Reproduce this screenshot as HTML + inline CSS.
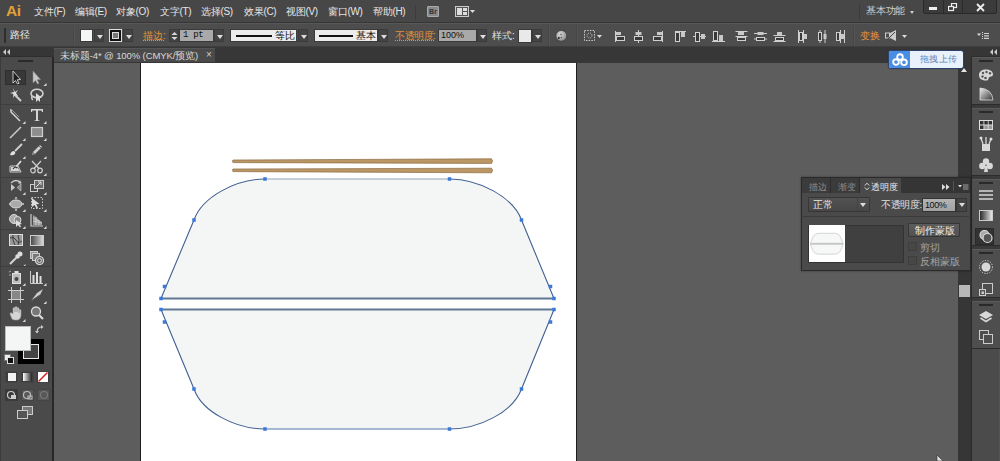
<!DOCTYPE html>
<html><head><meta charset="utf-8">
<style>
*{margin:0;padding:0;box-sizing:border-box}
html,body{width:1000px;height:461px;overflow:hidden;background:#5d5d5d;font-family:"Liberation Sans",sans-serif;color:#ddd;font-size:11px}
.a{position:absolute}
#menubar{left:0;top:0;width:1000px;height:23px;background:#474747;border-bottom:1px solid #363636}
#ctrl{left:0;top:23px;width:1000px;height:24px;background:#4d4d4d;border-top:1px solid #585858;border-bottom:1px solid #3e3e3e}
#strip{left:0;top:47px;width:1000px;height:16px;background:#373737}
#tools{left:0;top:57px;width:54px;height:404px;background:#4a4a4a;border-right:2px solid #282828;border-left:1px solid #3c3c3c}
#artboard{left:140px;top:63px;width:437px;height:398px;background:#fff;border-left:1px solid #1e1e1e;border-right:1px solid #1e1e1e}
#scroll{left:958px;top:62px;width:14px;height:399px;background:#363636}
#dock{left:971px;top:57px;width:29px;height:404px;background:#3a3a3a;border-left:1px solid #2a2a2a}
.mi{top:5px;font-size:10px;color:#e6e6e6;white-space:nowrap;letter-spacing:-0.3px}
.sep{width:2px;background:#474747;border-right:1px solid #555}
.dd{width:10px;height:13px;background:#444;border:1px solid #3a3a3a}
.dd::after{content:"";position:absolute;left:2px;top:5px;border-left:3px solid transparent;border-right:3px solid transparent;border-top:4px solid #ddd}
.or{color:#e5923a}
.dtext{font-size:10px;white-space:nowrap}
</style></head><body>
<!-- MENU BAR -->
<div class="a" id="menubar">
  <div class="a" style="left:6px;top:2px;font-size:15.5px;font-weight:bold;color:#e39f3a;letter-spacing:-0.5px">Ai</div>
  <div class="a mi" style="left:34px">文件(F)</div>
  <div class="a mi" style="left:75px">编辑(E)</div>
  <div class="a mi" style="left:116px">对象(O)</div>
  <div class="a mi" style="left:160px">文字(T)</div>
  <div class="a mi" style="left:201px">选择(S)</div>
  <div class="a mi" style="left:244px">效果(C)</div>
  <div class="a mi" style="left:286px">视图(V)</div>
  <div class="a mi" style="left:328px">窗口(W)</div>
  <div class="a mi" style="left:373px">帮助(H)</div>
  <div class="a" style="left:415px;top:5px;width:1px;height:15px;background:#3c3c3c"></div>
  <div class="a" style="left:427px;top:6px;width:12px;height:11px;background:#8a8a8a;border:1px solid #aaa;border-radius:1px;font-size:7px;font-weight:bold;color:#333;line-height:9px;text-align:center">Br</div>
  <svg class="a" style="left:455px;top:6px" width="20" height="12"><rect x="0.5" y="0.5" width="13" height="10" fill="#555" stroke="#ccc"/><rect x="2" y="2" width="5" height="7" fill="#ddd"/><rect x="8" y="2" width="4" height="3" fill="#ddd"/><rect x="8" y="6" width="4" height="3" fill="#ddd"/><path d="M15,4 L20,4 L17.5,7Z" fill="#ddd"/></svg>
  <div class="a" style="left:859px;top:4px;width:1px;height:16px;background:#3c3c3c"></div>
  <div class="a mi" style="left:866px;top:5px;color:#cfcfcf;font-size:9.5px;letter-spacing:-0.2px">基本功能</div>
  <div class="a" style="left:910px;top:11px;border-left:2px solid transparent;border-right:2px solid transparent;border-top:3px solid #ccc"></div>
  <div class="a" style="left:923px;top:0;width:74px;height:14px;background:#3b3b3b;border:1px solid #2a2a2a;border-top:none;border-radius:0 0 3px 3px"></div>
  <div class="a" style="left:943px;top:0;width:1px;height:13px;background:#2a2a2a"></div>
  <div class="a" style="left:962px;top:0;width:1px;height:13px;background:#2a2a2a"></div>
  <div class="a" style="left:929px;top:7px;width:8px;height:3px;background:#eee"></div>
  <svg class="a" style="left:948px;top:3px" width="10" height="9"><rect x="3.5" y="0.5" width="5" height="4" fill="none" stroke="#eee" stroke-width="1.2"/><rect x="0.5" y="3.5" width="5" height="4" fill="#3b3b3b" stroke="#eee" stroke-width="1.2"/></svg>
  <svg class="a" style="left:976px;top:3px" width="9" height="9"><path d="M1,1 L8,8 M8,1 L1,8" stroke="#eee" stroke-width="1.8"/></svg>
</div>
<!-- CONTROL BAR -->
<div class="a" id="ctrl">
  <div class="a" style="left:4px;top:4px;width:2px;height:15px;background:#2e2e2e"></div>
  <div class="a dtext" style="left:10px;top:5px;font-size:9.5px;color:#ececec">路径</div>
  <div class="a sep" style="left:73px;top:2px;height:20px"></div>
  <div class="a" style="left:80px;top:5px;width:13px;height:13px;background:#f4f6f6;border:1px solid #3a3a3a"></div>
  <div class="a dd" style="left:94px;top:5px"></div>
  <div class="a" style="left:109px;top:5px;width:13px;height:13px;background:#111;border:1px solid #ddd"><div class="a" style="left:2px;top:2px;width:7px;height:7px;border:1px solid #ddd;background:#777"></div></div>
  <div class="a dd" style="left:123px;top:5px"></div>
  <div class="a dtext or" style="left:143px;top:5px;text-decoration:underline dotted">描边:</div>
  <div class="a" style="left:169px;top:5px;width:10px;height:13px;background:#444;border:1px solid #3a3a3a"></div>
  <svg class="a" style="left:171px;top:7px" width="7" height="10"><path d="M0.5,4 L3.5,1 L6.5,4Z M0.5,6 L3.5,9 L6.5,6Z" fill="#d8d8d8"/></svg>
  <div class="a" style="left:179px;top:5px;width:35px;height:13px;background:#a9a9a9;border:1px solid #3a3a3a;color:#111;font-family:'Liberation Mono',monospace;font-size:9px;padding-left:3px;line-height:11px;letter-spacing:-0.3px">1 pt</div>
  <div class="a dd" style="left:214px;top:5px"></div>
  <div class="a" style="left:230px;top:5px;width:67px;height:13px;background:#ececec;border:1px solid #3a3a3a;color:#111">
    <div class="a" style="left:5px;top:5px;width:36px;height:2px;background:#111"></div>
    <div class="a dtext" style="left:44px;top:0px;line-height:11px">等比</div></div>
  <div class="a dd" style="left:298px;top:5px"></div>
  <div class="a" style="left:314px;top:5px;width:64px;height:13px;background:#ececec;border:1px solid #3a3a3a;color:#111">
    <div class="a" style="left:4px;top:5px;width:34px;height:2px;background:#111"></div>
    <div class="a dtext" style="left:41px;top:0px;line-height:11px">基本</div></div>
  <div class="a dd" style="left:378px;top:5px"></div>
  <div class="a dtext or" style="left:395px;top:5px;text-decoration:underline dotted;letter-spacing:-0.5px">不透明度:</div>
  <div class="a" style="left:438px;top:5px;width:39px;height:13px;background:#a9a9a9;border:1px solid #3a3a3a;color:#111;font-size:9px;padding-left:2px;line-height:11px">100%</div>
  <div class="a dd" style="left:477px;top:5px"></div>
  <div class="a dtext" style="left:492px;top:5px;color:#e0e0e0">样式:</div>
  <div class="a" style="left:518px;top:5px;width:14px;height:14px;background:#e9e9e9;border:1px solid #3a3a3a"></div>
  <div class="a dd" style="left:532px;top:5px"></div>
  <div class="a sep" style="left:548px;top:2px;height:20px"></div>
  <svg class="a" style="left:555px;top:6px" width="13" height="12"><defs><radialGradient id="gl" cx="0.4" cy="0.35" r="0.7"><stop offset="0" stop-color="#d8d8d8"/><stop offset="1" stop-color="#8a8a8a"/></radialGradient></defs><circle cx="6.3" cy="5.8" r="5.4" fill="url(#gl)" stroke="#333" stroke-width="0.6"/><circle cx="3.8" cy="8" r="1" fill="#222"/><circle cx="6" cy="4.5" r="0.7" fill="#444"/><circle cx="6.3" cy="7.5" r="0.7" fill="#555"/></svg>
  <div class="a sep" style="left:576px;top:2px;height:20px"></div>
  <svg class="a" style="left:584px;top:6px" width="20" height="12"><rect x="0.5" y="0.5" width="10" height="10" fill="none" stroke="#ccc" stroke-dasharray="1.5,1.2"/><circle cx="5.5" cy="5.5" r="2.5" fill="none" stroke="#ccc" stroke-dasharray="1,1"/><path d="M13,5 L18,5 L15.5,8Z" fill="#ddd"/></svg>
  
  <svg class="a" style="left:614px;top:6px" width="16" height="13"><path d="M1.5,1 L1.5,12" stroke="#cfcfcf" stroke-width="1"/><rect x="2" y="2" width="5" height="3" fill="#c8c8c8"/><rect x="2.5" y="6.5" width="8" height="4" fill="#3a3a3a" stroke="#d0d0d0" stroke-width="1"/></svg><svg class="a" style="left:633px;top:6px" width="16" height="13"><path d="M5.5,0 L5.5,13" stroke="#cfcfcf" stroke-width="1"/><rect x="2.5" y="2" width="6" height="3" fill="#c8c8c8"/><rect x="1.5" y="6.5" width="8" height="4" fill="#3a3a3a" stroke="#d0d0d0" stroke-width="1"/></svg><svg class="a" style="left:652px;top:6px" width="16" height="13"><path d="M10.5,1 L10.5,12" stroke="#cfcfcf" stroke-width="1"/><rect x="5" y="2" width="5" height="3" fill="#c8c8c8"/><rect x="1.5" y="6.5" width="8" height="4" fill="#3a3a3a" stroke="#d0d0d0" stroke-width="1"/></svg><svg class="a" style="left:674px;top:6px" width="16" height="13"><path d="M1,1.5 L12,1.5" stroke="#cfcfcf" stroke-width="1"/><rect x="1.5" y="2.5" width="4" height="9" fill="#3a3a3a" stroke="#d0d0d0" stroke-width="1"/><rect x="7" y="2" width="4" height="5" fill="#c8c8c8"/></svg><svg class="a" style="left:693px;top:6px" width="16" height="13"><path d="M0,6.5 L13,6.5" stroke="#cfcfcf" stroke-width="1"/><rect x="2.5" y="2.5" width="4" height="9" fill="#3a3a3a" stroke="#d0d0d0" stroke-width="1"/><rect x="8" y="4" width="4" height="5" fill="#c8c8c8"/></svg><svg class="a" style="left:712px;top:6px" width="16" height="13"><path d="M0,11.5 L13,11.5" stroke="#cfcfcf" stroke-width="1"/><rect x="1.5" y="1.5" width="4" height="9" fill="#3a3a3a" stroke="#d0d0d0" stroke-width="1"/><rect x="7" y="5" width="4" height="6" fill="#c8c8c8"/></svg><svg class="a" style="left:735px;top:6px" width="16" height="13"><path d="M0.5,1.5 L12.5,1.5 M0.5,6.5 L12.5,6.5" stroke="#cfcfcf" stroke-width="1"/><rect x="3" y="2" width="6" height="3" fill="#c8c8c8"/><rect x="2.5" y="7.5" width="8" height="3" fill="#3a3a3a" stroke="#d0d0d0" stroke-width="1"/></svg><svg class="a" style="left:754px;top:6px" width="16" height="13"><path d="M0,3.5 L13,3.5 M0,9 L13,9" stroke="#cfcfcf" stroke-width="1"/><rect x="3.5" y="2" width="6" height="3" fill="#c8c8c8"/><rect x="2.5" y="7.5" width="8" height="3" fill="#3a3a3a" stroke="#d0d0d0" stroke-width="1"/></svg><svg class="a" style="left:773px;top:6px" width="16" height="13"><path d="M0.5,5.5 L12.5,5.5 M0.5,11.5 L12.5,11.5" stroke="#cfcfcf" stroke-width="1"/><rect x="4" y="2" width="5" height="3" fill="#c8c8c8"/><rect x="2.5" y="7.5" width="8" height="3" fill="#3a3a3a" stroke="#d0d0d0" stroke-width="1"/></svg><svg class="a" style="left:797px;top:6px" width="16" height="13"><path d="M1.5,0 L1.5,13 M6.5,0 L6.5,13" stroke="#cfcfcf" stroke-width="1"/><rect x="2.5" y="2.5" width="3" height="8" fill="#3a3a3a" stroke="#d0d0d0" stroke-width="1"/><rect x="7" y="4" width="3" height="5" fill="#c8c8c8"/></svg><svg class="a" style="left:816px;top:6px" width="16" height="13"><path d="M4,0 L4,13 M9,0 L9,13" stroke="#cfcfcf" stroke-width="1"/><rect x="2.5" y="2.5" width="3" height="8" fill="#3a3a3a" stroke="#d0d0d0" stroke-width="1"/><rect x="7.5" y="4" width="3" height="5" fill="#c8c8c8"/></svg><svg class="a" style="left:835px;top:6px" width="16" height="13"><path d="M5.5,0 L5.5,13 M9.5,0 L9.5,13" stroke="#cfcfcf" stroke-width="1"/><rect x="1.5" y="2.5" width="3" height="8" fill="#3a3a3a" stroke="#d0d0d0" stroke-width="1"/><rect x="6" y="4" width="3" height="5" fill="#c8c8c8"/></svg>
  <div class="a sep" style="left:853px;top:2px;height:20px"></div>
  <div class="a dtext or" style="left:860px;top:5px;font-size:10px">变换</div>
  <svg class="a" style="left:885px;top:6px" width="24" height="12"><rect x="0.5" y="3" width="4" height="5" fill="none" stroke="#ccc"/><path d="M5,3 L11,0 L11,11 L5,8Z" fill="#ccc"/><path d="M2,10 L10,2" stroke="#444"/><path d="M17,5 L22,5 L19.5,8Z" fill="#ddd"/></svg>
  <svg class="a" style="left:976px;top:8px" width="14" height="8"><path d="M1,1.5 L5,1.5 L3,4Z" fill="#ddd"/><path d="M6.5,0 L6.5,7" stroke="#ddd" stroke-dasharray="1,1"/><path d="M8,1.5 L13,1.5 M8,3.8 L13,3.8 M8,6.3 L13,6.3" stroke="#d0d0d0" stroke-width="1.2"/></svg>
</div>
<div class="a" id="strip"></div>
<div class="a" style="left:54px;top:48px;width:161px;height:14px;background:#4a4a4a;border-top:1px solid #555"></div>
<div class="a" style="left:60px;top:50px;font-size:9.5px;color:#d8d8d8;white-space:nowrap;letter-spacing:-0.1px">未标题-4* @ 100% (CMYK/预览)</div>
<div class="a" style="left:206px;top:49px;font-size:10px;color:#ccc">×</div>
<div class="a" style="left:0;top:47px;width:53px;height:10px;background:#363636;border-bottom:1px solid #2e2e2e"></div>
<svg class="a" style="left:3px;top:49px" width="8" height="6"><path d="M3,0 L0,3 L3,6Z M7,0 L4,3 L7,6Z" fill="#ccc"/></svg>
<div class="a" style="left:971px;top:47px;width:29px;height:10px;background:#363636;border-bottom:1px solid #2e2e2e"></div>
<svg class="a" style="left:990px;top:49px" width="8" height="6"><path d="M3,0 L0,3 L3,6Z M7,0 L4,3 L7,6Z" fill="#ccc"/></svg>
<!-- TOOLS -->
<div class="a" id="tools"></div>
<div class="a" style="left:18px;top:60px;width:15px;height:2px;background:#2a2a2a"></div>
<div class="a" style="left:5px;top:70px;width:21px;height:15px;background:#383838;border:1px solid #2e2e2e"></div>
<svg class="a" style="left:8px;top:69px" width="16" height="16"><path d="M5,2 L5,14 L7.5,11.5 L9.5,15 L11,14.3 L9.2,10.8 L12.5,10.5Z" fill="#1e1e1e" stroke="#d5d5d5" stroke-width="0.9"/></svg>
<svg class="a" style="left:29px;top:69px" width="18" height="18"><path d="M4,2 L4,14 L6.5,11.5 L8.5,15 L10,14.3 L8.2,10.8 L11.5,10.5Z" fill="#c8c8c8" stroke="#888" stroke-width="0.6"/><path d="M14.5,17 L17.5,14 L17.5,17Z" fill="#d8d8d8"/></svg>
<svg class="a" style="left:8px;top:87px" width="16" height="16"><path d="M6,7 L13,14" stroke="#cfcfcf" stroke-width="2"/><path d="M5,1 L6,5 L2,6 L5.5,7 L5,11 L7,8 L10,9 L8,6 L10,3 L7,5Z" fill="#e0e0e0"/></svg>
<svg class="a" style="left:29px;top:87px" width="16" height="16"><ellipse cx="8" cy="6.5" rx="6" ry="4.2" fill="none" stroke="#cfcfcf" stroke-width="1.6"/><path d="M7,6 L7,15 L9,13 L11,15 L11,11 L13,11Z" fill="#ddd"/><path d="M3,9 Q2,12 4,13" fill="none" stroke="#cfcfcf" stroke-width="1.3"/></svg>
<div class="a" style="left:1px;top:104px;width:50px;height:1px;background:#3e3e3e"></div>
<svg class="a" style="left:8px;top:107px" width="18" height="18"><path d="M3,2 L3,5 L10,12 L12,14" fill="none" stroke="#d0d0d0" stroke-width="1.6"/><path d="M3,2 L11,10" stroke="#999" stroke-width="1"/><path d="M14.5,17 L17.5,14 L17.5,17Z" fill="#d8d8d8"/></svg>
<svg class="a" style="left:29px;top:107px" width="18" height="18"><path d="M2,2 L14,2 L14,5 L13,5 L12.5,3.5 L9,3.5 L9,13 L11,14 L5,14 L7,13 L7,3.5 L3.5,3.5 L3,5 L2,5Z" fill="#d5d5d5"/><path d="M14.5,17 L17.5,14 L17.5,17Z" fill="#d8d8d8"/></svg>
<svg class="a" style="left:8px;top:124px" width="18" height="18"><path d="M2,14 L13,3" stroke="#d0d0d0" stroke-width="1.4"/><path d="M14.5,17 L17.5,14 L17.5,17Z" fill="#d8d8d8"/></svg>
<svg class="a" style="left:29px;top:124px" width="18" height="18"><rect x="2.5" y="3.5" width="11" height="9" fill="#8d8d8d" stroke="#cfcfcf" stroke-width="1.2"/><path d="M14.5,17 L17.5,14 L17.5,17Z" fill="#d8d8d8"/></svg>
<svg class="a" style="left:8px;top:142px" width="18" height="18"><path d="M14,2 L7,9" stroke="#d0d0d0" stroke-width="1.8"/><path d="M2,13 Q3,9 6,9 Q8,10 7,12 Q5,14 2,13Z" fill="#e0e0e0"/><path d="M14.5,17 L17.5,14 L17.5,17Z" fill="#d8d8d8"/></svg>
<svg class="a" style="left:29px;top:142px" width="18" height="18"><path d="M3,13 L4,10 L11,3 L13,5 L6,12Z" fill="#cfcfcf"/><path d="M3,13 L4,10 L6,12Z" fill="#777"/><path d="M10,4 L12,6" stroke="#666"/><path d="M14.5,17 L17.5,14 L17.5,17Z" fill="#d8d8d8"/></svg>
<svg class="a" style="left:8px;top:159px" width="16" height="16"><path d="M3,8 L9,8 L12,12 L3,12Z" fill="#d5d5d5"/><path d="M2,7 L10,7 L13,13 L2,13Z" fill="none" stroke="#ccc"/><path d="M13,2 L8,8" stroke="#ddd" stroke-width="1.8"/><path d="M5,10 Q7,7 9,9" stroke="#333" fill="none" stroke-width="1.2"/></svg>
<svg class="a" style="left:29px;top:159px" width="18" height="18"><circle cx="4" cy="11.5" r="2.3" fill="none" stroke="#d0d0d0" stroke-width="1.2"/><circle cx="11" cy="11.5" r="2.3" fill="none" stroke="#d0d0d0" stroke-width="1.2"/><path d="M5,9.5 L12,2 M10,9.5 L3,2" stroke="#d0d0d0" stroke-width="1.2"/><path d="M14.5,17 L17.5,14 L17.5,17Z" fill="#d8d8d8"/></svg>
<div class="a" style="left:1px;top:177px;width:50px;height:1px;background:#3e3e3e"></div>
<svg class="a" style="left:8px;top:178px" width="18" height="18"><path d="M3,13 L3,6 L7,9.5Z" fill="#ccc"/><path d="M13,13 L13,6 L9,9.5Z" fill="#888" stroke="#ccc" stroke-width="0.6"/><path d="M3,5 Q8,0 13,5" fill="none" stroke="#ccc" stroke-width="1.3"/><path d="M12,2 L13.5,5.5 L10,5.5Z" fill="#ccc"/><path d="M14.5,17 L17.5,14 L17.5,17Z" fill="#d8d8d8"/></svg>
<svg class="a" style="left:29px;top:178px" width="18" height="18"><rect x="1.5" y="6.5" width="7" height="7" fill="none" stroke="#ccc"/><rect x="5.5" y="2.5" width="9" height="8" fill="#6a6a6a" stroke="#ccc"/><path d="M7,9 L12,4 M9,4 L12,4 L12,7" fill="none" stroke="#ddd"/><path d="M14.5,17 L17.5,14 L17.5,17Z" fill="#d8d8d8"/></svg>
<svg class="a" style="left:8px;top:195px" width="18" height="18"><ellipse cx="8" cy="9" rx="6" ry="4" fill="#aaa" stroke="#ddd"/><path d="M8,2 L8,4 M8,14 L8,16 M1,9 L2,9 M14,9 L16,9" stroke="#ccc" stroke-width="1.5"/><path d="M14.5,17 L17.5,14 L17.5,17Z" fill="#d8d8d8"/></svg>
<svg class="a" style="left:29px;top:195px" width="18" height="18"><rect x="2.5" y="2.5" width="11" height="11" fill="none" stroke="#ccc" stroke-dasharray="1.5,1.5"/><path d="M3,3 L3,12 L5.5,10 L7.5,13.5 L9,12.8 L7.2,9.3 L10.5,9Z" fill="#ddd"/><path d="M14.5,17 L17.5,14 L17.5,17Z" fill="#d8d8d8"/></svg>
<svg class="a" style="left:8px;top:212px" width="18" height="18"><circle cx="6" cy="7" r="4.5" fill="#aaa" stroke="#ddd"/><circle cx="9.5" cy="8" r="3.5" fill="#888" stroke="#ddd"/><path d="M8,8 L8,15 L10,13 L12,15.5 L13,14.5 L11.5,12.5 L14,12Z" fill="#e0e0e0"/><path d="M14.5,17 L17.5,14 L17.5,17Z" fill="#d8d8d8"/></svg>
<svg class="a" style="left:29px;top:212px" width="18" height="18"><path d="M2,2 L2,14 L14,14" fill="none" stroke="#ccc" stroke-width="1.2"/><path d="M4,3 L4,13 L13,13 L13,10 L10,8 L7,5Z" fill="#9a9a9a"/><path d="M4,6 L10,9 M4,9 L13,11 M7,5 L7,13 M10,8 L10,13" stroke="#ddd" stroke-width="0.7"/><path d="M14.5,17 L17.5,14 L17.5,17Z" fill="#d8d8d8"/></svg>
<div class="a" style="left:1px;top:229px;width:50px;height:1px;background:#3e3e3e"></div>
<svg class="a" style="left:8px;top:232px" width="16" height="16"><rect x="1.5" y="2.5" width="13" height="11" fill="#999" stroke="#ddd"/><path d="M2,6 Q6,4 8,8 Q10,12 14,9 M5,3 Q4,8 7,13 M10,3 Q12,8 10,13" fill="none" stroke="#333" stroke-width="0.9"/></svg>
<svg class="a" style="left:29px;top:232px" width="16" height="16"><defs><linearGradient id="gg" x1="0" x2="1"><stop offset="0" stop-color="#444"/><stop offset="1" stop-color="#ddd"/></linearGradient></defs><rect x="1.5" y="3.5" width="13" height="10" fill="url(#gg)" stroke="#ccc"/></svg>
<svg class="a" style="left:8px;top:250px" width="18" height="18"><path d="M2,14 L9,7" stroke="#d5d5d5" stroke-width="2"/><path d="M8,5 L11,8" stroke="#ddd" stroke-width="3"/><circle cx="12" cy="4" r="2.5" fill="#ddd"/><path d="M14.5,17 L17.5,14 L17.5,17Z" fill="#d8d8d8"/></svg>
<svg class="a" style="left:29px;top:250px" width="16" height="16"><rect x="1.5" y="1.5" width="7" height="7" fill="#999" stroke="#ccc"/><rect x="3.5" y="3.5" width="7" height="7" fill="#777" stroke="#ccc"/><circle cx="10.5" cy="10.5" r="4" fill="#666" stroke="#ddd" stroke-width="1.2"/><circle cx="10.5" cy="10.5" r="2" fill="none" stroke="#ddd"/></svg>
<div class="a" style="left:1px;top:266px;width:50px;height:1px;background:#3e3e3e"></div>
<svg class="a" style="left:8px;top:269px" width="18" height="18"><rect x="4.5" y="4.5" width="8" height="10" fill="#bbb" stroke="#ddd"/><circle cx="8.5" cy="10" r="2" fill="#444"/><rect x="6.5" y="2" width="4" height="2.5" fill="#ddd"/><path d="M1,3 L3,2 M1,6 L3,6" stroke="#aaa"/><path d="M14.5,17 L17.5,14 L17.5,17Z" fill="#d8d8d8"/></svg>
<svg class="a" style="left:29px;top:269px" width="18" height="18"><path d="M1.5,2 L1.5,14.5 L14,14.5" fill="none" stroke="#ccc"/><rect x="3.5" y="6" width="2" height="8" fill="#ddd"/><rect x="7" y="3" width="2" height="11" fill="#ddd"/><rect x="10.5" y="7" width="2" height="7" fill="#ddd"/><path d="M14.5,17 L17.5,14 L17.5,17Z" fill="#d8d8d8"/></svg>

<svg class="a" style="left:8px;top:287px" width="16" height="16"><rect x="4" y="4" width="8" height="8" fill="#888"/><path d="M3.5,0 L3.5,16 M12.5,0 L12.5,16 M0,3.5 L16,3.5 M0,12.5 L16,12.5" stroke="#ccc"/></svg>
<svg class="a" style="left:29px;top:287px" width="18" height="18"><path d="M2,14 L8,6 L14,2 L11,8Z" fill="#ccc"/><path d="M2,14 L11,8" stroke="#555"/><path d="M14.5,17 L17.5,14 L17.5,17Z" fill="#d8d8d8"/></svg>
<svg class="a" style="left:8px;top:305px" width="18" height="18"><path d="M4,14 L2,9 Q2,7 4,8 L5,9 L5,3 Q6,2 7,3 L7,7 L7,2 Q8,1 9,2 L9,7 L9,3 Q10,2 11,3 L11,8 L11,5 Q12,4 13,5 L13,10 Q13,14 10,15 L6,15Z" fill="#d5d5d5" stroke="#999" stroke-width="0.6"/><path d="M14.5,17 L17.5,14 L17.5,17Z" fill="#d8d8d8"/></svg>
<svg class="a" style="left:29px;top:305px" width="16" height="16"><circle cx="7" cy="6.5" r="4.5" fill="#777" stroke="#ddd" stroke-width="1.3"/><path d="M10,10 L14,14" stroke="#ddd" stroke-width="2.2"/></svg>
<div class="a" style="left:18px;top:339px;width:26px;height:25px;background:#000"></div>
<div class="a" style="left:23px;top:344px;width:16px;height:15px;border:1px solid #e8e8e8;background:#444"></div>
<div class="a" style="left:5px;top:326px;width:26px;height:25px;background:#f4f6f6;border:1px solid #bbb"></div>
<svg class="a" style="left:35px;top:325px" width="10" height="10"><path d="M2,7 Q2,2 7,2" fill="none" stroke="#ccc" stroke-width="1.1"/><path d="M6,0 L8.5,2 L6,4Z M0,6 L2,8.5 L4,6Z" fill="#ccc"/></svg>
<svg class="a" style="left:4px;top:354px" width="10" height="10"><rect x="0.5" y="0.5" width="6" height="6" fill="#eee" stroke="#777"/><rect x="3.5" y="3.5" width="6" height="6" fill="#111" stroke="#ddd"/></svg>
<div class="a" style="left:5px;top:371px;width:13px;height:12px;background:#3d3d3d;border:1px solid #444"></div>
<div class="a" style="left:8px;top:373px;width:8px;height:8px;background:#f2f2f2"></div>
<div class="a" style="left:21px;top:371px;width:13px;height:12px;background:#3d3d3d;border:1px solid #444"></div>
<div class="a" style="left:23px;top:373px;width:9px;height:8px;background:linear-gradient(90deg,#fff,#222)"></div>
<div class="a" style="left:36px;top:371px;width:14px;height:12px;background:#3d3d3d;border:1px solid #444"></div>
<svg class="a" style="left:38px;top:372px" width="10" height="10"><rect x="0" y="0" width="10" height="10" fill="#fff"/><path d="M0.5,9.5 L9.5,0.5" stroke="#d02020" stroke-width="1.5"/></svg>
<div class="a" style="left:21px;top:389px;width:13px;height:12px;background:#575757;border:1px solid #444"></div><div class="a" style="left:37px;top:389px;width:13px;height:12px;background:#575757;border:1px solid #444"></div>
<div class="a" style="left:5px;top:389px;width:13px;height:12px;background:#3a3a3a"></div>
<svg class="a" style="left:6px;top:390px" width="11" height="10"><circle cx="5" cy="5" r="3.5" fill="none" stroke="#ccc" stroke-width="1.2"/><rect x="5" y="5" width="5" height="4" fill="#ccc"/></svg>
<svg class="a" style="left:22px;top:390px" width="11" height="10"><circle cx="5" cy="5" r="3.5" fill="none" stroke="#bbb" stroke-width="1.2"/><rect x="6" y="6" width="4" height="3" fill="none" stroke="#bbb"/></svg>
<svg class="a" style="left:39px;top:390px" width="11" height="10"><circle cx="5" cy="5" r="3.5" fill="none" stroke="#777" stroke-width="1.2"/></svg>
<svg class="a" style="left:17px;top:406px" width="17" height="14"><rect x="5.5" y="0.5" width="10" height="8" fill="#777" stroke="#ccc"/><rect x="0.5" y="4.5" width="10" height="8" fill="#555" stroke="#ccc"/></svg>
<!-- CANVAS -->
<div class="a" id="artboard"></div>
<div class="a" id="scroll"></div>
<div class="a" style="left:961px;top:68px;border-left:3.5px solid transparent;border-right:3.5px solid transparent;border-bottom:4px solid #e6e6e6"></div>
<div class="a" style="left:959px;top:285px;width:11px;height:12px;background:#b8b8b8"></div>
<div class="a" id="dock"></div>
<div class="a" style="left:972px;top:57px;width:28px;height:48px;background:#4e4e4e;border-top:1px solid #5a5a5a;border-bottom:1px solid #2c2c2c"></div>
<div class="a" style="left:979px;top:60px;width:14px;height:2px;background:#2a2a2a"></div>
<div class="a" style="left:972px;top:108px;width:28px;height:68px;background:#4e4e4e;border-top:1px solid #5a5a5a;border-bottom:1px solid #2c2c2c"></div>
<div class="a" style="left:979px;top:111px;width:14px;height:2px;background:#2a2a2a"></div>
<div class="a" style="left:972px;top:179px;width:28px;height:67px;background:#4e4e4e;border-top:1px solid #5a5a5a;border-bottom:1px solid #2c2c2c"></div>
<div class="a" style="left:979px;top:182px;width:14px;height:2px;background:#2a2a2a"></div>
<div class="a" style="left:972px;top:249px;width:28px;height:49px;background:#4e4e4e;border-top:1px solid #5a5a5a;border-bottom:1px solid #2c2c2c"></div>
<div class="a" style="left:979px;top:252px;width:14px;height:2px;background:#2a2a2a"></div>
<div class="a" style="left:972px;top:301px;width:28px;height:48px;background:#4e4e4e;border-top:1px solid #5a5a5a;border-bottom:1px solid #2c2c2c"></div>
<div class="a" style="left:979px;top:304px;width:14px;height:2px;background:#2a2a2a"></div>
<div class="a" style="left:972px;top:349px;width:28px;height:112px;background:#4b4b4b;border-right:1px solid #555"></div>
<svg class="a" style="left:978px;top:67px" width="16" height="16"><path d="M8,2.5 C13,2.5 15,5 15,7.5 C15,10 12,9 11,10.5 C10,12 11,13.5 8,13.5 C3,13.5 1,11 1,8 C1,4.5 4,2.5 8,2.5Z" fill="#d8d8d8"/><circle cx="5" cy="6" r="1.2" fill="#555"/><circle cx="8.5" cy="5" r="1.2" fill="#555"/><circle cx="12" cy="6.3" r="1.2" fill="#555"/><circle cx="4.5" cy="9.5" r="1.2" fill="#555"/><circle cx="7.5" cy="11" r="1.3" fill="#555"/></svg>
<svg class="a" style="left:978px;top:86px" width="16" height="16"><defs><linearGradient id="pg" x1="0" y1="0" x2="1" y2="1"><stop offset="0" stop-color="#eee"/><stop offset="1" stop-color="#333"/></linearGradient></defs><path d="M2,2 Q14,3 15,14 L2,14Z" fill="url(#pg)" stroke="#ddd" stroke-width="0.8"/></svg>
<svg class="a" style="left:978px;top:117px" width="16" height="16"><rect x="1" y="3" width="14" height="10" fill="#e0e0e0"/><g fill="#333"><rect x="2" y="4" width="3.5" height="3.5"/><rect x="6.3" y="4" width="3.5" height="3.5"/><rect x="10.6" y="4" width="3.5" height="3.5"/><rect x="2" y="8.5" width="3.5" height="3.5"/></g><rect x="6.3" y="8.5" width="3.5" height="3.5" fill="#999"/><rect x="10.6" y="8.5" width="3.5" height="3.5" fill="#999"/></svg>
<svg class="a" style="left:978px;top:136px" width="16" height="16"><rect x="4" y="8" width="8" height="7" fill="#d8d8d8"/><path d="M5,8 L3,2 M8,8 L8,1 M11,8 L13,3" stroke="#d8d8d8" stroke-width="1.3"/><circle cx="3" cy="2" r="1.5" fill="#ddd"/><circle cx="13" cy="3" r="1.5" fill="#ddd"/></svg>
<svg class="a" style="left:978px;top:157px" width="16" height="16"><circle cx="8" cy="4.5" r="3.2" fill="#d8d8d8"/><circle cx="4.3" cy="9" r="3.2" fill="#d8d8d8"/><circle cx="11.7" cy="9" r="3.2" fill="#d8d8d8"/><path d="M7,9 L6,15 L10,15 L9,9Z" fill="#d8d8d8"/></svg>
<svg class="a" style="left:978px;top:187px" width="16" height="16"><path d="M1,4 L15,4 M1,8 L15,8 M1,12 L15,12" stroke="#d8d8d8" stroke-width="1.6"/></svg>
<svg class="a" style="left:978px;top:207px" width="16" height="16"><defs><linearGradient id="dg" x1="0" x2="1"><stop offset="0" stop-color="#222"/><stop offset="1" stop-color="#eee"/></linearGradient></defs><rect x="1.5" y="3.5" width="13" height="10" fill="url(#dg)" stroke="#ccc"/></svg>
<div class="a" style="left:975px;top:228px;width:19px;height:17px;background:#333;border:1px solid #2a2a2a"></div>
<svg class="a" style="left:978px;top:228px" width="16" height="16"><circle cx="6.5" cy="7" r="4.5" fill="#aaa" stroke="#ddd" stroke-width="1.2"/><circle cx="9.5" cy="10" r="4.5" fill="#555" stroke="#ddd" stroke-width="1.2"/></svg>
<svg class="a" style="left:978px;top:259px" width="16" height="16"><circle cx="8" cy="8" r="6.5" fill="none" stroke="#ccc" stroke-dasharray="1.3,1.3"/><circle cx="8" cy="8" r="4.5" fill="#d8d8d8"/></svg>
<svg class="a" style="left:978px;top:282px" width="16" height="16"><rect x="4.5" y="1.5" width="10" height="10" fill="none" stroke="#ccc"/><rect x="1.5" y="7.5" width="6" height="6" fill="#555" stroke="#ccc"/><rect x="3.5" y="9.5" width="2.5" height="2.5" fill="#ccc"/></svg>
<svg class="a" style="left:978px;top:309px" width="16" height="16"><path d="M8,2 L15,6 L8,10 L1,6Z" fill="#d8d8d8"/><path d="M2.5,9 L8,12.5 L13.5,9" fill="none" stroke="#d8d8d8" stroke-width="1.5"/></svg>
<svg class="a" style="left:978px;top:329px" width="16" height="16"><rect x="1.5" y="1.5" width="9" height="9" fill="#4e4e4e" stroke="#ccc"/><rect x="5.5" y="5.5" width="9" height="9" fill="#4e4e4e" stroke="#ccc"/></svg>
<svg class="a" style="left:0;top:0" width="1000" height="461" viewBox="0 0 1000 461">
  <path d="M265,179 L449.5,179 C479,179 513,197 521.5,220 L554,298.5 L161,298.5 L194,220 C202,197 236,179 265,179 Z" fill="#f4f6f6" stroke="none"/>
  <path d="M161,309.5 L554,309.5 L521.5,389 C513,412 479,429 449.5,429 L265,429 C236,429 202,412 194,389 Z" fill="#f4f6f6" stroke="none"/>
  <path d="M449.5,179 C479,179 513,197 521.5,220 L554,298.5 M161,298.5 L194,220 C202,197 236,179 265,179" fill="none" stroke="#41608f" stroke-width="1.1"/>
  <path d="M554,309.5 L521.5,389 C513,412 479,429 449.5,429 M265,429 C236,429 202,412 194,389 L161,309.5" fill="none" stroke="#41608f" stroke-width="1.1"/>
  <line x1="265" y1="179" x2="449.5" y2="179" stroke="#8ea3b9" stroke-width="1"/>
  <line x1="265" y1="429" x2="449.5" y2="429" stroke="#5474a8" stroke-width="1"/>
  <line x1="161" y1="298.5" x2="554" y2="298.5" stroke="#617793" stroke-width="1.8"/>
  <line x1="161" y1="309.5" x2="554" y2="309.5" stroke="#617793" stroke-width="1.8"/>
  <path d="M233,160 L491.5,158.8 Q493.5,161.1 491.5,163.4 L233,162.6 Q231.8,161.3 233,160Z" fill="#bb9766" stroke="#89693f" stroke-width="0.7"/>
  <path d="M233,169 L491.5,168.2 Q493.5,170.5 491.5,172.8 L233,171.6 Q231.8,170.3 233,169Z" fill="#bb9766" stroke="#89693f" stroke-width="0.7"/>
  <g fill="#3a78dc"><rect x="263.25" y="177.25" width="3.5" height="3.5"/><rect x="447.75" y="177.25" width="3.5" height="3.5"/><rect x="192.25" y="218.25" width="3.5" height="3.5"/><rect x="519.75" y="218.25" width="3.5" height="3.5"/><rect x="162.75" y="284.75" width="3.5" height="3.5"/><rect x="548.75" y="284.75" width="3.5" height="3.5"/><rect x="159.25" y="296.75" width="3.5" height="3.5"/><rect x="552.25" y="296.75" width="3.5" height="3.5"/><rect x="159.25" y="307.75" width="3.5" height="3.5"/><rect x="552.25" y="307.75" width="3.5" height="3.5"/><rect x="162.75" y="320.25" width="3.5" height="3.5"/><rect x="548.75" y="320.25" width="3.5" height="3.5"/><rect x="192.25" y="387.25" width="3.5" height="3.5"/><rect x="519.75" y="387.25" width="3.5" height="3.5"/><rect x="263.25" y="427.25" width="3.5" height="3.5"/><rect x="447.75" y="427.25" width="3.5" height="3.5"/></g>
  <path d="M937,455 L937,461 L943,461Z" fill="#ddd" stroke="#333" stroke-width="0.6"/>
</svg>

<div class="a" style="left:888px;top:50px;width:76px;height:19px;border-radius:3px;background:#e9f2fc;border:1px solid #2d4468;box-shadow:0 0 1px #223;overflow:hidden">
  <div class="a" style="left:0;top:0;width:21px;height:17px;background:#4a8de4"></div>
  <svg class="a" style="left:2px;top:1px" width="17" height="15"><g fill="none" stroke="#fff" stroke-width="1.9"><circle cx="9" cy="5" r="2.8"/><circle cx="5" cy="10" r="2.8"/><circle cx="13" cy="10.3" r="2.8"/></g></svg>
  <div class="a" style="left:31px;top:3px;font-size:8.8px;color:#6585b8;white-space:nowrap;letter-spacing:0.3px">拖拽上传</div>
</div>
<div class="a" style="left:801px;top:177px;width:170px;height:94px;background:#4a4a4a;border:1px solid #2a2a2a;box-shadow:0 0 2px rgba(0,0,0,0.4)">
  <div class="a" style="left:0;top:0;width:168px;height:15px;background:#353535"></div>
  <div class="a" style="left:0;top:0;width:29px;height:15px;background:#3b3b3b;border-right:1px solid #2c2c2c"></div>
  <div class="a" style="left:7px;top:3px;font-size:9px;color:#8e8e8e;white-space:nowrap">描边</div>
  <div class="a" style="left:29px;top:0;width:29px;height:15px;background:#3b3b3b;border-right:1px solid #2c2c2c"></div>
  <div class="a" style="left:36px;top:3px;font-size:9px;color:#8e8e8e;white-space:nowrap">渐变</div>
  <div class="a" style="left:58px;top:0;width:41px;height:15px;background:#4a4a4a"></div>
  <svg class="a" style="left:62px;top:4px" width="6" height="9"><path d="M0.8,3.5 L3,1.2 L5.2,3.5 M0.8,5.5 L3,7.8 L5.2,5.5" fill="none" stroke="#ddd" stroke-width="1"/></svg>
  <div class="a" style="left:69px;top:3px;font-size:9px;color:#e8e8e8;white-space:nowrap">透明度</div>
  <svg class="a" style="left:140px;top:6px" width="8" height="6"><path d="M0,0 L3.5,3 L0,6Z M4,0 L7.5,3 L4,6Z" fill="#ddd"/></svg>
  <div class="a" style="left:151px;top:3px;width:1px;height:10px;background:#555"></div>
  <svg class="a" style="left:156px;top:6px" width="11" height="7"><path d="M0,1 L4,1 L2,3.5Z" fill="#ddd"/><rect x="5" y="0" width="5.5" height="6" fill="#6a6a6a"/></svg>
  <div class="a" style="left:6px;top:19px;width:62px;height:15px;background:linear-gradient(#525252,#474747);border:1px solid #363636;border-radius:1px"></div>
  <div class="a" style="left:55px;top:20px;width:1px;height:13px;background:#444"></div>
  <div class="a" style="left:11px;top:21px;font-size:9.5px;color:#ececec;white-space:nowrap">正常</div>
  <div class="a" style="left:58px;top:25px;border-left:3px solid transparent;border-right:3px solid transparent;border-top:4px solid #ddd"></div>
  <div class="a" style="left:79px;top:21px;font-size:9.5px;color:#e0e0e0;white-space:nowrap;letter-spacing:-0.4px">不透明度:</div>
  <div class="a" style="left:120px;top:20px;width:34px;height:14px;background:linear-gradient(#b4b4b4,#a2a2a2);border:1px solid #333;color:#111;font-size:9px;padding-left:2px;line-height:12px;letter-spacing:-0.4px">100%</div>
  <div class="a" style="left:154px;top:20px;width:11px;height:14px;background:#444;border:1px solid #363636"></div>
  <div class="a" style="left:157px;top:25px;border-left:3px solid transparent;border-right:3px solid transparent;border-top:4px solid #ddd"></div>
  <div class="a" style="left:1px;top:38px;width:166px;height:1px;background:#3a3a3a"></div>
  <div class="a" style="left:6px;top:47px;width:96px;height:38px;background:#404040;border:1px solid #333"></div>
  <div class="a" style="left:7px;top:47px;width:36px;height:37px;background:#fff"></div>
  <svg class="a" style="left:6px;top:47px" width="37" height="37"><g transform="translate(2.3,8.3) scale(0.0835) translate(-161,-179)"><path d="M265,179 L449.5,179 C479,179 513,197 521.5,220 L554,298.5 L161,298.5 L194,220 C202,197 236,179 265,179 Z M161,309.5 L554,309.5 L521.5,389 C513,412 479,429 449.5,429 L265,429 C236,429 202,412 194,389 Z" fill="#f6f7f7" stroke="#d5d5d5" stroke-width="1" vector-effect="non-scaling-stroke"/><path d="M161,304 L554,304" stroke="#c4c4c4" stroke-width="1.6" vector-effect="non-scaling-stroke"/></g></svg>
  <div class="a" style="left:106px;top:45px;width:52px;height:14px;background:linear-gradient(#5c5c5c,#525252);border:1px solid #363636;border-radius:1px"></div>
  <div class="a" style="left:113px;top:47px;font-size:9.5px;color:#eee;white-space:nowrap">制作蒙版</div>
  <div class="a" style="left:106px;top:64px;width:9px;height:9px;border:1px solid #3e3e3e;background:#474747"></div>
  <div class="a" style="left:118px;top:64px;font-size:9.5px;color:#a5a5a5;white-space:nowrap">剪切</div>
  <div class="a" style="left:106px;top:78px;width:9px;height:9px;border:1px solid #3e3e3e;background:#474747"></div>
  <div class="a" style="left:118px;top:78px;font-size:9.5px;color:#a5a5a5;white-space:nowrap">反相蒙版</div>
</div>
</body></html>
